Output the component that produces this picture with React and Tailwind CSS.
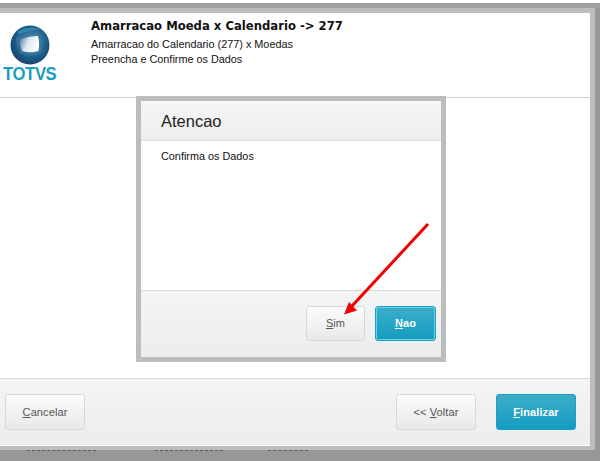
const font = { fontFamily: '"Liberation Sans", Arial, sans-serif' };

function Logo() {
  return (
    <div className="flex flex-col items-center w-[58px]">
      <svg width="40" height="40" viewBox="0 0 40 40">
        <defs>
          <radialGradient id="g1" cx="0.55" cy="0.42" r="0.62">
            <stop offset="0" stopColor="#5a93b5" />
            <stop offset="0.62" stopColor="#1d5f8b" />
            <stop offset="1" stopColor="#14406c" />
          </radialGradient>
          <linearGradient id="g2" x1="0" y1="0" x2="1" y2="0.35">
            <stop offset="0" stopColor="#56789a" />
            <stop offset="0.5" stopColor="#dfe7ee" />
            <stop offset="1" stopColor="#ffffff" />
          </linearGradient>
        </defs>
        <circle cx="20" cy="20" r="19.5" fill="url(#g1)" />
        <path d="M6 12 Q18 7.5 30 8.5 Q33.5 18 31 29 Q19 32 10 28.5 Q5.5 20 6 12Z" fill="#3a7ba3" opacity="0.6" />
        <path d="M10 14.5 Q19 10.5 28 11 Q30 18 28.5 26 Q20 28.5 12 26 Q9.5 20 10 14.5Z" fill="url(#g2)" />
        <path d="M8 6 Q20 0 33 5 Q24 3 8 10Z" fill="#3fa9c9" opacity="0.5" />
      </svg>
      <div className="text-[18.5px] leading-[18px] font-bold text-[#1b9dbf] tracking-[-0.4px] scale-x-[0.9]">TOTVS</div>
    </div>
  );
}

function Btn({ children, primary, w = "w-[80px]", h = "h-[36px]", ring }) {
  const cls = primary
    ? "bg-gradient-to-b from-[#39aeca] to-[#119cc0] border-[#1c9fc1] text-white font-bold"
    : "bg-gradient-to-b from-[#fbfbfb] to-[#e9e9e9] border-[#d8d8d8] text-[#555]";
  return (
    <div className={`${w} ${h} ${cls} ${ring ? "outline outline-1 -outline-offset-2 outline-[#6fd0e8]" : ""} border rounded-[3px] flex items-center justify-center text-[11px] tracking-[0.1px] shrink-0`}>
      {children}
    </div>
  );
}

export default function App() {
  return (
    <div style={font} className="relative w-[600px] h-[461px] overflow-hidden bg-[#979797]">
      <div className="h-[3px] bg-white" />
      <div className="h-[5px] bg-[#a0a0a0]" />
      <div className="w-[595px] border-t-[5px] border-r-[5px] border-b-[4px] border-[#bdbdbd] bg-white h-[442px] flex flex-col">
        <header className="h-[84px] shrink-0 flex">
          <div className="pl-[1px] pt-[12px]"><Logo /></div>
          <div className="pl-[32px] pt-[6px] text-[#111]">
            <div className="leading-[15px] font-bold" style={{ fontFamily: '"DejaVu Sans", Verdana, sans-serif', fontSize: "11.65px" }}>Amarracao Moeda x Calendario -&gt; 277</div>
            <div className="text-[10.85px] leading-[15px] mt-[3px]">Amarracao do Calendario (277) x Moedas</div>
            <div className="text-[10.85px] leading-[15px]">Preencha e Confirme os Dados</div>
          </div>
        </header>
        <div className="h-[1px] bg-[#cfcfcf] shrink-0" />
        <main className="flex-1 bg-white" />
        <footer className="h-[67px] shrink-0 border-t border-[#d8d8d8] bg-gradient-to-b from-[#f3f4f4] to-[#eceded] flex items-center justify-between pl-[5px] pr-[14px]">
          <Btn><span><u>C</u>ancelar</span></Btn>
          <div className="flex gap-[20px]">
            <Btn>&lt;&lt;&nbsp;<span><u>V</u>oltar</span></Btn>
            <Btn primary><span><u>F</u>inalizar</span></Btn>
          </div>
        </footer>
        <div className="h-[1px] bg-white shrink-0" />
      </div>
      <div className="flex h-[1px] pl-[27px] gap-[59px]">
        <div className="w-[69px] border-t border-dashed border-[#5c5c5c]" />
        <div className="w-[68px] border-t border-dashed border-[#5c5c5c]" />
        <div className="w-[40px] ml-[-14px] border-t border-dashed border-[#5c5c5c]" />
      </div>

      {/* modal */}
      <div className="absolute left-[136px] top-[96px] w-[310px] h-[266px] border-[5px] border-[#bdbdbd] bg-white flex flex-col">
        <div className="h-[40px] shrink-0 border-b border-[#d8d8d8] bg-gradient-to-b from-[#f5f6f6] to-[#eceded] pl-[20px] pt-[2px] flex items-center text-[16.5px] text-[#222]">Atencao</div>
        <div className="flex-1 pl-[20px] pt-[8px] text-[10.85px] leading-[15px] text-[#111]">Confirma os Dados</div>
        <div className="h-[67px] shrink-0 border-t border-[#d8d8d8] bg-gradient-to-b from-[#f3f4f4] to-[#eceded] flex justify-end items-start gap-[10px] pr-[5px] pt-[15px]">
          <Btn w="w-[59px]" h="h-[35px]"><span><u>S</u>im</span></Btn>
          <Btn primary ring w="w-[61px]" h="h-[35px]"><span><u>N</u>ao</span></Btn>
        </div>
      </div>

      {/* arrow */}
      <svg className="absolute left-0 top-0" width="600" height="461" viewBox="0 0 600 461">
        <line x1="428" y1="224" x2="352" y2="306" stroke="#f00000" strokeWidth="3" />
        <polygon points="344,314.5 349,302 357,310.5" fill="#f00000" />
      </svg>
    </div>
  );
}
